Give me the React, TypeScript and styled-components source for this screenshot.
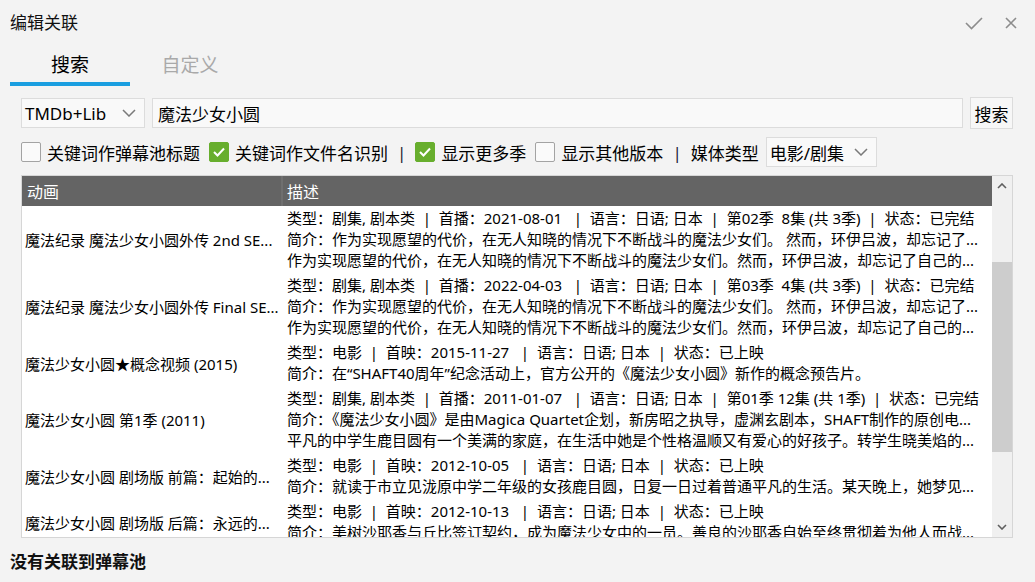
import React from "react";
import styled, { createGlobalStyle } from "styled-components";

const Global = createGlobalStyle`
  html, body { margin: 0; padding: 0; background: #f3f3f3; }
  body { font-family: "Noto Sans", "Noto Sans CJK SC", sans-serif; color: #000; }
  * { box-sizing: border-box; }
`;

const Window = styled.div`
  width: 1035px;
  height: 582px;
  background: #f3f3f3;
  display: flex;
  flex-direction: column;
  overflow: hidden;
`;

const TitleBar = styled.div`
  height: 46px;
  flex: none;
  display: flex;
  align-items: center;
  justify-content: space-between;
  padding: 0 18px 0 10px;
`;

const Title = styled.div`
  font-size: 17px;
  line-height: 20px;
  color: #111;
`;

const TitleActions = styled.div`
  display: flex;
  align-items: center;
  gap: 22px;
`;

const IconBox = styled.span`
  display: flex;
  align-items: center;
  justify-content: center;
  color: #8c8c8c;
`;

const TabBar = styled.div`
  display: flex;
  height: 40px;
  flex: none;
  padding-left: 10px;
`;

const Tab = styled.div<{ $active?: boolean }>`
  width: 120px;
  display: flex;
  align-items: center;
  justify-content: center;
  font-size: 19px;
  color: ${(p) => (p.$active ? "#000" : "#a9a9a9")};
  border-bottom: 4px solid ${(p) => (p.$active ? "#1a9ee0" : "transparent")};
`;

const Content = styled.div`
  padding: 11px 22px 0 21px;
  display: flex;
  flex-direction: column;
`;

const SearchRow = styled.div`
  display: flex;
  align-items: center;
  gap: 7px;
  height: 32px;
`;

const Combo = styled.div<{ $width: number }>`
  width: ${(p) => p.$width}px;
  height: 30px;
  flex: none;
  display: flex;
  align-items: center;
  justify-content: space-between;
  padding: 0 8px 0 3px;
  background: #f9f9f9;
  border: 1px solid #dcdcdc;
  font-size: 17px;
  color: #000;
`;

const Input = styled.div`
  flex: 1;
  height: 30px;
  display: flex;
  align-items: center;
  padding: 0 5px;
  background: #f9f9f9;
  border: 1px solid #dcdcdc;
  font-size: 17px;
`;

const Button = styled.div`
  width: 43px;
  height: 32px;
  flex: none;
  display: flex;
  align-items: center;
  justify-content: center;
  background: #f7f7f7;
  border: 1px solid #dcdcdc;
  font-size: 17px;
`;

const OptionRow = styled.div`
  display: flex;
  align-items: center;
  gap: 9px;
  height: 30px;
  margin-top: 8px;
`;

const CheckItem = styled.label`
  display: flex;
  align-items: center;
  gap: 6px;
  font-size: 17px;
  white-space: nowrap;
`;

const Box = styled.span<{ $checked?: boolean }>`
  width: 20px;
  height: 20px;
  flex: none;
  display: flex;
  align-items: center;
  justify-content: center;
  border-radius: 2px;
  background: ${(p) => (p.$checked ? "#67ae2d" : "#fafafa")};
  border: 1px solid ${(p) => (p.$checked ? "#67ae2d" : "#a3a3a3")};
`;

const Sep = styled.span`
  font-size: 17px;
  color: #1f2233;
`;

const MediaGroup = styled.div`
  display: flex;
  align-items: center;
  gap: 7px;
  font-size: 17px;
`;

const Table = styled.div`
  margin-top: 8px;
  height: 363px;
  background: #fff;
  border: 1px solid #d6d6d6;
  display: flex;
`;

const TableMain = styled.div`
  flex: 1;
  min-width: 0;
  display: flex;
  flex-direction: column;
  overflow: hidden;
`;

const Header = styled.div`
  height: 30px;
  flex: none;
  display: flex;
  background: #646464;
  color: #fff;
  font-size: 16px;
`;

const HeadCell = styled.div<{ $first?: boolean }>`
  display: flex;
  align-items: center;
  padding-left: ${(p) => (p.$first ? 5 : 4)}px;
  ${(p) => (p.$first ? "width: 261px; flex: none; border-right: 2px solid #6f6f6f;" : "flex: 1;")}
`;

const Body = styled.div`
  flex: 1;
  overflow: hidden;
`;

const Row = styled.div`
  display: flex;
`;

const NameCell = styled.div`
  width: 261px;
  flex: none;
  display: flex;
  align-items: center;
  padding: 0 6px 0 3px;
  font-size: 15px;
  white-space: nowrap;
  overflow: hidden;
`;

const DescCell = styled.div`
  flex: 1;
  min-width: 0;
  padding: 2px 4px 2px 4px;
  font-size: 15px;
  line-height: 21px;
`;

const DescLine = styled.div`
  white-space: pre;
  overflow: hidden;
`;

const ScrollBar = styled.div`
  width: 20px;
  flex: none;
  background: #f0f0f0;
  display: flex;
  flex-direction: column;
  color: #606060;
`;

const ScrollArrow = styled.div`
  height: 20px;
  flex: none;
  display: flex;
  align-items: center;
  justify-content: center;
`;

const ScrollTrack = styled.div`
  flex: 1;
  display: flex;
  flex-direction: column;
`;

const Thumb = styled.div<{ $top: number; $height: number }>`
  margin-top: ${(p) => p.$top}px;
  height: ${(p) => p.$height}px;
  background: #cdcdcd;
`;

const Footer = styled.div`
  padding: 14px 10px 0;
  font-size: 17px;
  line-height: 20px;
  font-weight: bold;
  color: #111;
`;

const Chevron = ({ up }: { up?: boolean }) => (
  <svg width="14" height="8" viewBox="0 0 14 8" fill="none">
    <polyline
      points={up ? "1,7 7,1 13,7" : "1,1 7,7 13,1"}
      stroke="#7a7a7a"
      strokeWidth="1.5"
    />
  </svg>
);

const SmallChevron = ({ up }: { up?: boolean }) => (
  <svg width="10" height="6" viewBox="0 0 10 6" fill="none">
    <polyline
      points={up ? "1,5 5,1 9,5" : "1,1 5,5 9,1"}
      stroke="#5f5f5f"
      strokeWidth="1.6"
    />
  </svg>
);

const Tick = () => (
  <svg width="14" height="12" viewBox="0 0 14 12" fill="none">
    <polyline points="2,6 5.5,9.5 12,2.5" stroke="#fff" strokeWidth="2" />
  </svg>
);

const CheckBox = ({ checked, label }: { checked?: boolean; label: string }) => (
  <CheckItem>
    <Box $checked={checked}>{checked && <Tick />}</Box>
    {label}
  </CheckItem>
);

type Item = { name: string; lines: string[] };

const rows: Item[] = [
  {
    name: "魔法纪录 魔法少女小圆外传 2nd SE...",
    lines: [
      "类型：剧集, 剧本类  |  首播：2021-08-01   |  语言：日语; 日本  |  第02季  8集 (共 3季)  |  状态：已完结",
      "简介：作为实现愿望的代价，在无人知晓的情况下不断战斗的魔法少女们。 然而，环伊吕波，却忘记了...",
      "作为实现愿望的代价，在无人知晓的情况下不断战斗的魔法少女们。然而，环伊吕波，却忘记了自己的...",
    ],
  },
  {
    name: "魔法纪录 魔法少女小圆外传 Final SE...",
    lines: [
      "类型：剧集, 剧本类  |  首播：2022-04-03   |  语言：日语; 日本  |  第03季  4集 (共 3季)  |  状态：已完结",
      "简介：作为实现愿望的代价，在无人知晓的情况下不断战斗的魔法少女们。 然而，环伊吕波，却忘记了...",
      "作为实现愿望的代价，在无人知晓的情况下不断战斗的魔法少女们。然而，环伊吕波，却忘记了自己的...",
    ],
  },
  {
    name: "魔法少女小圆★概念视频 (2015)",
    lines: [
      "类型：电影  |  首映：2015-11-27   |  语言：日语; 日本  |  状态：已上映",
      "简介：在“SHAFT40周年”纪念活动上，官方公开的《魔法少女小圆》新作的概念预告片。",
    ],
  },
  {
    name: "魔法少女小圆 第1季 (2011)",
    lines: [
      "类型：剧集, 剧本类  |  首播：2011-01-07   |  语言：日语; 日本  |  第01季 12集 (共 1季)  |  状态：已完结",
      "简介：《魔法少女小圆》是由Magica Quartet企划，新房昭之执导，虚渊玄剧本，SHAFT制作的原创电...",
      "平凡的中学生鹿目圆有一个美满的家庭，在生活中她是个性格温顺又有爱心的好孩子。转学生晓美焰的...",
    ],
  },
  {
    name: "魔法少女小圆 剧场版 前篇：起始的...",
    lines: [
      "类型：电影  |  首映：2012-10-05   |  语言：日语; 日本  |  状态：已上映",
      "简介：就读于市立见泷原中学二年级的女孩鹿目圆，日复一日过着普通平凡的生活。某天晚上，她梦见...",
    ],
  },
  {
    name: "魔法少女小圆 剧场版 后篇：永远的...",
    lines: [
      "类型：电影  |  首映：2012-10-13   |  语言：日语; 日本  |  状态：已上映",
      "简介：美树沙耶香与丘比签订契约，成为魔法少女中的一员。善良的沙耶香自始至终贯彻着为他人而战...",
    ],
  },
];

export default function App() {
  return (
    <Window>
      <Global />
      <TitleBar>
        <Title>编辑关联</Title>
        <TitleActions>
          <IconBox>
            <svg width="18" height="13" viewBox="0 0 18 13" fill="none">
              <polyline points="1,6 6.5,11.5 17,1" stroke="#8c8c8c" strokeWidth="1.6" />
            </svg>
          </IconBox>
          <IconBox>
            <svg width="12" height="12" viewBox="0 0 12 12" fill="none">
              <path d="M1 1 L11 11 M11 1 L1 11" stroke="#8c8c8c" strokeWidth="1.6" />
            </svg>
          </IconBox>
        </TitleActions>
      </TitleBar>
      <TabBar>
        <Tab $active>搜索</Tab>
        <Tab>自定义</Tab>
      </TabBar>
      <Content>
        <SearchRow>
          <Combo $width={124}>
            TMDb+Lib
            <Chevron />
          </Combo>
          <Input>魔法少女小圆</Input>
          <Button>搜索</Button>
        </SearchRow>
        <OptionRow>
          <CheckBox label="关键词作弹幕池标题" />
          <CheckBox checked label="关键词作文件名识别" />
          <Sep>|</Sep>
          <CheckBox checked label="显示更多季" />
          <CheckBox label="显示其他版本" />
          <Sep>|</Sep>
          <MediaGroup>
            媒体类型
            <Combo $width={111}>
              电影/剧集
              <Chevron />
            </Combo>
          </MediaGroup>
        </OptionRow>
        <Table>
          <TableMain>
            <Header>
              <HeadCell $first>动画</HeadCell>
              <HeadCell>描述</HeadCell>
            </Header>
            <Body>
              {rows.map((r) => (
                <Row key={r.name}>
                  <NameCell>{r.name}</NameCell>
                  <DescCell>
                    {r.lines.map((l, i) => (
                      <DescLine key={i}>{l}</DescLine>
                    ))}
                  </DescCell>
                </Row>
              ))}
            </Body>
          </TableMain>
          <ScrollBar>
            <ScrollArrow>
              <SmallChevron up />
            </ScrollArrow>
            <ScrollTrack>
              <Thumb $top={66} $height={190} />
            </ScrollTrack>
            <ScrollArrow>
              <SmallChevron />
            </ScrollArrow>
          </ScrollBar>
        </Table>
      </Content>
      <Footer>没有关联到弹幕池</Footer>
    </Window>
  );
}
